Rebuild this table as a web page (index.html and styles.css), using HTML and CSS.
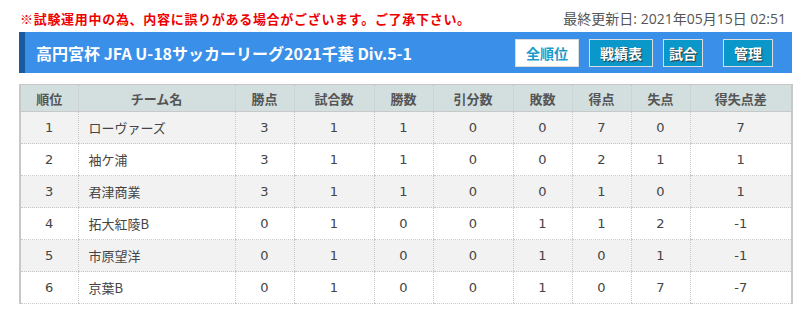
FILE: index.html
```html
<!DOCTYPE html>
<html lang="ja">
<head>
<meta charset="utf-8">
<link rel="stylesheet" href="styles.css">
</head>
<body>
<div class="page">
  <div class="notice-row">
    <span class="notice">※試験運用中の為、内容に誤りがある場合がございます。ご了承下さい。</span>
    <span class="updated">最終更新日: 2021年05月15日 02:51</span>
  </div>
  <div class="titlebar">
    <h1 class="title">高円宮杯 JFA U-18サッカーリーグ2021千葉 Div.5-1</h1>
    <div class="btns">
      <span class="btn btn-active">全順位</span>
      <span class="btn">戦績表</span>
      <span class="btn">試合</span>
      <span class="btn">管理</span>
    </div>
  </div>
  <table class="standings">
    <colgroup>
      <col style="width:58px"><col style="width:157px"><col style="width:59px"><col style="width:80px"><col style="width:59px"><col style="width:80px"><col style="width:59px"><col style="width:59px"><col style="width:59px"><col>
    </colgroup>
    <thead>
      <tr><th>順位</th><th>チーム名</th><th>勝点</th><th>試合数</th><th>勝数</th><th>引分数</th><th>敗数</th><th>得点</th><th>失点</th><th>得失点差</th></tr>
    </thead>
    <tbody>
      <tr><td>1</td><td class="team">ローヴァーズ</td><td>3</td><td>1</td><td>1</td><td>0</td><td>0</td><td>7</td><td>0</td><td>7</td></tr>
      <tr><td>2</td><td class="team">袖ケ浦</td><td>3</td><td>1</td><td>1</td><td>0</td><td>0</td><td>2</td><td>1</td><td>1</td></tr>
      <tr><td>3</td><td class="team">君津商業</td><td>3</td><td>1</td><td>1</td><td>0</td><td>0</td><td>1</td><td>0</td><td>1</td></tr>
      <tr><td>4</td><td class="team">拓大紅陵B</td><td>0</td><td>1</td><td>0</td><td>0</td><td>1</td><td>1</td><td>2</td><td>-1</td></tr>
      <tr><td>5</td><td class="team">市原望洋</td><td>0</td><td>1</td><td>0</td><td>0</td><td>1</td><td>0</td><td>1</td><td>-1</td></tr>
      <tr><td>6</td><td class="team">京葉B</td><td>0</td><td>1</td><td>0</td><td>0</td><td>1</td><td>0</td><td>7</td><td>-7</td></tr>
    </tbody>
  </table>
</div>
</body>
</html>
```
FILE: styles.css
```css
html, body {
  margin: 0;
  padding: 0;
  background: #fff;
}
body {
  font-family: "Noto Sans CJK JP", "Noto Sans", sans-serif;
  color: #333;
}
.page {
  width: 773px;
  margin-left: 19px;
  padding-top: 8px;
}
.notice-row {
  display: flex;
  justify-content: space-between;
  align-items: center;
  height: 20px;
  padding-right: 6px;
}
.notice {
  color: #ee0000;
  font-weight: bold;
  font-size: 13px;
  letter-spacing: 0.7px;
  padding-left: 1px;
}
.updated {
  color: #555;
  font-size: 14px;
  font-family: "Open Sans", "Noto Sans CJK JP", sans-serif;
}
.titlebar {
  margin-top: 4px;
  height: 41px;
  background: #3a8fe8;
  border-left: 6px solid #1a5aa0;
  display: flex;
  align-items: center;
  justify-content: space-between;
  box-sizing: border-box;
  padding-left: 11px;
  padding-right: 19px;
}
.title {
  margin: 0;
  color: #fff;
  font-size: 16px;
  font-weight: bold;
  letter-spacing: 0;
}
.btns {
  display: flex;
  gap: 10px;
}
.btn {
  box-sizing: border-box;
  height: 28px;
  padding: 0;
  white-space: nowrap;
  display: flex;
  align-items: center;
  justify-content: center;
  background: #0a98cb;
  color: #fff;
  border: 1px solid #dcdcdc;
  font-size: 14px;
  font-weight: bold;
  text-shadow: 1px 1px 1px #333;
}
.btn:nth-child(2) { width: 64px; }
.btn:nth-child(3) { width: 40px; margin-right: 10px; }
.btn:nth-child(4) { width: 50px; }
.btn-active {
  width: 64px;
  background: #fff;
  color: #1a9acb;
  text-shadow: none;
}
.standings {
  margin-top: 11px;
  width: 774px;
  border-collapse: collapse;
  table-layout: fixed;
  font-size: 13px;
  border-top: 1px solid #c8c8c8;
  border-left: 2px solid #c8c8c8;
  border-right: 2px solid #c8c8c8;
}
.standings th {
  background: #d3dfdf;
  color: #555;
  font-weight: bold;
  height: 26px;
  padding: 0;
  border-left: 1px dotted #c8c8c8;
  border-bottom: 1px solid #c8c8c8;
  font-size: 13px;
}
.standings td {
  height: 31px;
  padding: 0;
  text-align: center;
  color: #444;
  border-left: 1px dotted #c8c8c8;
  border-bottom: 1px dotted #c8c8c8;
  font-family: "DejaVu Sans", "Noto Sans CJK JP", sans-serif;
  font-size: 13px;
}
.standings td.team {
  text-align: left;
  padding-left: 10px;
  font-family: "Noto Sans CJK JP", sans-serif;
}
.standings tbody tr:nth-child(odd) td {
  background: #f2f2f2;
}
```
